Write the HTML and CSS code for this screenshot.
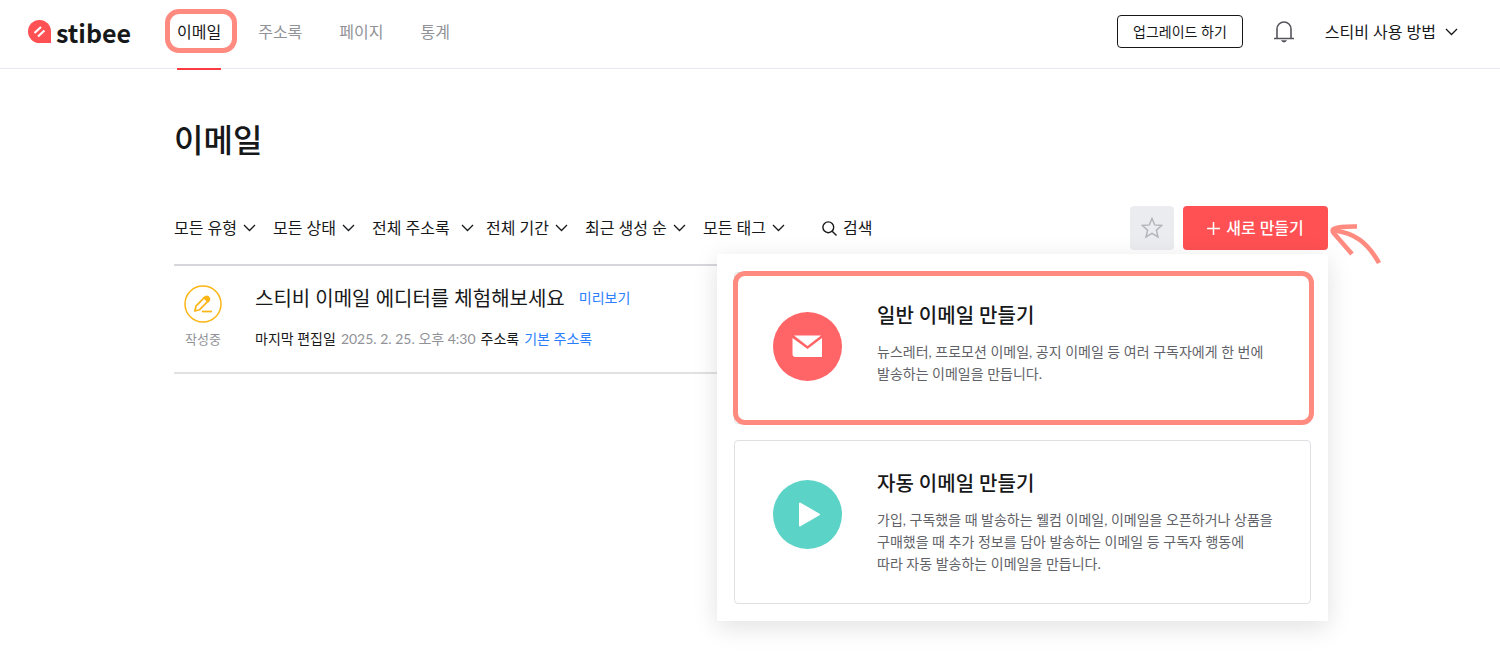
FILE: index.html
```html
<!DOCTYPE html>
<html lang="ko">
<head>
<meta charset="utf-8">
<meta name="viewport" content="width=device-width, initial-scale=1">
<title>이메일 - stibee</title>
<link rel="stylesheet" href="styles.css">
</head>
<body>
<header class="header">
  <a class="logo" href="#">
    <svg class="logo-mark" viewBox="0 0 23 23" aria-hidden="true"><path fill="#ff5053" d="M11.500 0A11.500 11.500 0 0 1 23 11.500V23H11.500A11.500 11.500 0 0 1 11.500 0z"/><path d="M6.500 13 13 7M10 16.500l6.500-6" stroke="#fff" stroke-width="2.200" fill="none"/></svg>
    <span class="logo-text">stibee</span>
  </a>
  <nav class="nav">
    <a class="nav-link nav-link-active" href="#" aria-current="page">이메일</a>
    <a class="nav-link" href="#">주소록</a>
    <a class="nav-link" href="#">페이지</a>
    <a class="nav-link" href="#">통계</a>
  </nav>
  <div class="header-tools">
    <button class="upgrade" type="button">업그레이드 하기</button>
    <button class="bell" type="button" aria-label="알림">
      <svg width="20" height="22" viewBox="0 0 20 22" fill="none" stroke="#55565c" stroke-width="1.600" aria-hidden="true"><path d="M0 17.500h20M3 17.500V8a7 7 0 0 1 14 0v9.500"/><path fill="#55565c" stroke="none" d="M7 19.300h6a3.200 3.200 0 0 1-6 0z"/></svg>
    </button>
    <button class="help" type="button">스티비 사용 방법
      <svg class="chevron" viewBox="0 0 13 8" aria-hidden="true"><path d="M1 1l5.500 5.500L12 1"/></svg>
    </button>
  </div>
</header>

<main class="main">
  <h1 class="title">이메일</h1>
  <div class="toolbar">
    <div class="filters">
      <div class="filter"><select class="select" aria-label="유형"><option>모든 유형</option></select><svg class="chevron" viewBox="0 0 13 8" aria-hidden="true"><path d="M1 1l5.500 5.500L12 1"/></svg></div>
      <div class="filter"><select class="select" aria-label="상태"><option>모든 상태</option></select><svg class="chevron" viewBox="0 0 13 8" aria-hidden="true"><path d="M1 1l5.500 5.500L12 1"/></svg></div>
      <div class="filter filter-wide"><select class="select" aria-label="주소록"><option>전체 주소록</option></select><svg class="chevron" viewBox="0 0 13 8" aria-hidden="true"><path d="M1 1l5.500 5.500L12 1"/></svg></div>
      <div class="filter"><select class="select" aria-label="기간"><option>전체 기간</option></select><svg class="chevron" viewBox="0 0 13 8" aria-hidden="true"><path d="M1 1l5.500 5.500L12 1"/></svg></div>
      <div class="filter"><select class="select" aria-label="정렬"><option>최근 생성 순</option></select><svg class="chevron" viewBox="0 0 13 8" aria-hidden="true"><path d="M1 1l5.500 5.500L12 1"/></svg></div>
      <div class="filter"><select class="select" aria-label="태그"><option>모든 태그</option></select><svg class="chevron" viewBox="0 0 13 8" aria-hidden="true"><path d="M1 1l5.500 5.500L12 1"/></svg></div>
      <button class="search" type="button">
        <svg width="15" height="15" viewBox="0 0 15 15" fill="none" stroke="#17181a" stroke-width="1.400" aria-hidden="true"><circle cx="6.300" cy="6.300" r="5.400"/><path d="M10.200 10.200l4.300 4.300"/></svg>
        검색
      </button>
    </div>
    <div class="actions">
      <button class="star" type="button" aria-label="즐겨찾기">
        <svg width="22" height="22" viewBox="0 0 22 22" fill="none" stroke="#b4b5ba" stroke-width="1.500" aria-hidden="true"><path d="M11 1.500l2.700 6.400 7 .6-5.300 4.600 1.600 6.900-6-3.700-6 3.700 1.600-6.900L1.300 8.500l7-.6z"/></svg>
      </button>
      <button class="create" type="button" aria-expanded="true">
        <svg width="13" height="13" viewBox="0 0 13 13" stroke="#fff" stroke-width="1.500" aria-hidden="true"><path d="M6.500 0v13M0 6.500h13"/></svg>
        새로 만들기
      </button>
      <svg class="pointer" width="52" height="44" viewBox="0 0 52 44" fill="none" stroke="#ff8a80" stroke-width="4.600" aria-hidden="true"><path d="M27 3.500C18 3.300 9 3.600 4.500 5.500c-2.500 1-2.500 3 0 5.500L22 31"/><path d="M4 7.500c20 2.500 33 11 45 32.500"/></svg>
      <div class="menu">
        <button class="card card-marked" type="button">
          <svg class="card-icon" viewBox="0 0 69 69" aria-hidden="true"><circle cx="34.500" cy="34.500" r="34.500" fill="#ff6467"/><path fill="#fff" d="M19.500 26v16a3 3 0 0 0 3 3H49V26L34.500 37z"/><path fill="#fff" d="M21 23.500h27L34.500 34z"/></svg>
          <span class="card-body">
            <span class="card-title">일반 이메일 만들기</span>
            <span class="card-text">뉴스레터, 프로모션 이메일, 공지 이메일 등 여러 구독자에게 한 번에<br>발송하는 이메일을 만듭니다.</span>
          </span>
        </button>
        <button class="card" type="button">
          <svg class="card-icon" viewBox="0 0 69 69" aria-hidden="true"><circle cx="34.500" cy="34.500" r="34.500" fill="#5cd3c7"/><path fill="#fff" stroke="#fff" stroke-width="2" stroke-linejoin="round" d="M27 23.500v22L46 34.500z"/></svg>
          <span class="card-body">
            <span class="card-title">자동 이메일 만들기</span>
            <span class="card-text">가입, 구독했을 때 발송하는 웰컴 이메일, 이메일을 오픈하거나 상품을<br>구매했을 때 추가 정보를 담아 발송하는 이메일 등 구독자 행동에<br>따라 자동 발송하는 이메일을 만듭니다.</span>
          </span>
        </button>
      </div>
    </div>
  </div>

  <ul class="list">
    <li class="row">
      <div class="status">
        <svg width="38" height="38" viewBox="0 0 38 38" fill="none" stroke="#fdb515" stroke-width="1.500" aria-hidden="true"><circle cx="19" cy="19" r="18"/><path stroke-linejoin="round" stroke-width="1.700" d="M10.800 26l1.200-4.800L20.200 12.700l3.600 3.600-8.400 8.500z"/><path fill="#fdb515" d="M20 12.700c1.500-1.500 2.900-2 4.500-.6s1.200 3-.2 4.500z"/><path stroke-width="1.700" d="M18 26.500h10"/></svg>
        <span class="status-text">작성중</span>
      </div>
      <div class="info">
        <div class="info-head">
          <h2 class="info-title">스티비 이메일 에디터를 체험해보세요</h2>
          <a class="link" href="#">미리보기</a>
        </div>
        <div class="meta">
          <span>마지막 편집일</span>
          <span class="date">2025. 2. 25. 오후 4:30</span>
          <span>주소록</span>
          <a class="link" href="#">기본 주소록</a>
        </div>
      </div>
    </li>
  </ul>
</main>
</body>
</html>
```

FILE: styles.css
```css
* {
  box-sizing: border-box;
}

body {
  min-height: 100vh;
  margin: 0;
  background: #fff;
  color: #17181a;
  font-family: Lato, "Noto Sans CJK KR", sans-serif;
  font-size: 16px;
  line-height: 24px;
}

a {
  color: inherit;
  text-decoration: none;
}

button,
select {
  margin: 0;
  padding: 0;
  border: 0;
  background: none;
  color: inherit;
  font: inherit;
}

svg {
  display: block;
  flex: none;
}

.chevron {
  width: 13px;
  height: 8px;
  fill: none;
  stroke: #17181a;
  stroke-width: 1.3;
}

.header {
  display: flex;
  align-items: center;
  height: 69px;
  padding: 0 42px 5px 28px;
  border-bottom: 1px solid #e6e9ef;
}

.logo {
  display: flex;
  align-items: center;
  gap: 5px;
  width: 149px;
}

.logo-mark {
  width: 23px;
  height: 23px;
}

.logo-text {
  font-family: "Noto Sans CJK KR", sans-serif;
  font-size: 25px;
  font-weight: 700;
  line-height: 20px;
}

.nav {
  display: flex;
  gap: 37px;
  color: #919297;
}

.nav-link {
  position: relative;
}

.nav-link-active {
  color: #17181a;
}

.nav-link-active::before {
  content: "";
  position: absolute;
  inset: -11px -16px -9px -12px;
  border: 5px solid #ff8a80;
  border-radius: 14px;
}

.nav-link-active::after {
  content: "";
  position: absolute;
  right: 0;
  bottom: -26px;
  left: 0;
  height: 2px;
  background: #ff3b3f;
}

.header-tools {
  display: flex;
  align-items: center;
  margin-left: auto;
}

.upgrade {
  height: 33px;
  padding: 0 15px;
  border: 1px solid #17181a;
  border-radius: 4px;
  font-size: 14px;
}

.bell {
  margin: 0 31px;
}

.help {
  display: flex;
  align-items: center;
  gap: 9px;
}

.main {
  padding: 47px 172px 0 174px;
}

.title {
  margin: 0 0 42px;
  font-size: 32px;
  font-weight: 500;
  line-height: 48px;
}

.toolbar,
.filters {
  display: flex;
  align-items: center;
}

.toolbar {
  justify-content: space-between;
}

.filters {
  gap: 17px;
}

.filter {
  display: grid;
  align-items: center;
}

.filter > * {
  grid-area: 1 / 1;
}

.filter .chevron {
  justify-self: end;
  pointer-events: none;
}

.filter-wide .chevron {
  margin-right: -5px;
}

.select {
  appearance: none;
  padding-right: 19px;
}

.search {
  display: flex;
  align-items: center;
  gap: 6px;
  margin-left: 20px;
}

.actions {
  display: flex;
  position: relative;
  gap: 9px;
}

.star,
.create {
  display: flex;
  align-items: center;
  justify-content: center;
  height: 44px;
  border-radius: 4px;
}

.star {
  width: 44px;
  background: #ebecf0;
}

.create {
  gap: 6px;
  width: 145px;
  background: #ff5053;
  color: #fff;
  font-weight: 500;
}

.pointer {
  position: absolute;
  top: 17px;
  left: 100%;
  margin-left: 2px;
}

.menu {
  display: flex;
  position: absolute;
  top: 48px;
  right: 0;
  flex-direction: column;
  gap: 16px;
  width: 611px;
  padding: 18px 17px 17px;
  background: #fff;
  box-shadow: 0 6px 24px rgba(0, 0, 0, 0.12);
}

.card {
  display: flex;
  position: relative;
  align-items: flex-start;
  gap: 35px;
  min-height: 152px;
  padding: 27px 38px 28px;
  border: 1px solid #dfe0e4;
  border-radius: 4px;
  text-align: left;
}

.card-marked::after {
  content: "";
  position: absolute;
  inset: -2px -4px -2px -2px;
  border: 5px solid #ff8a80;
  border-radius: 12px;
}

.card-icon {
  width: 69px;
  height: 69px;
  margin-top: 12px;
}

.card-body {
  display: flex;
  flex-direction: column;
  gap: 11px;
}

.card-title {
  font-size: 20px;
  font-weight: 500;
  line-height: 30px;
}

.card-text {
  color: #616268;
  font-size: 14px;
  line-height: 22px;
  white-space: nowrap;
}

.list {
  margin: 14px 0 0;
  padding: 0;
  border-top: 2px solid #d6d7dc;
  list-style: none;
}

.row {
  display: flex;
  gap: 23px;
  padding: 19px 0 21px;
  border-bottom: 2px solid #e1e1e4;
}

.status {
  display: flex;
  flex-direction: column;
  align-items: center;
  gap: 6px;
  width: 58px;
}

.status-text {
  color: #919297;
  font-size: 13px;
  line-height: 20px;
}

.info-head {
  display: flex;
  align-items: center;
  gap: 14px;
}

.info-title {
  margin: 0;
  font-size: 20px;
  font-weight: 400;
  line-height: 26px;
}

.link {
  color: #2b7fff;
  font-size: 14px;
}

.meta {
  display: flex;
  gap: 5px;
  margin-top: 16px;
  font-size: 14px;
}

.date {
  color: #919297;
}
```
